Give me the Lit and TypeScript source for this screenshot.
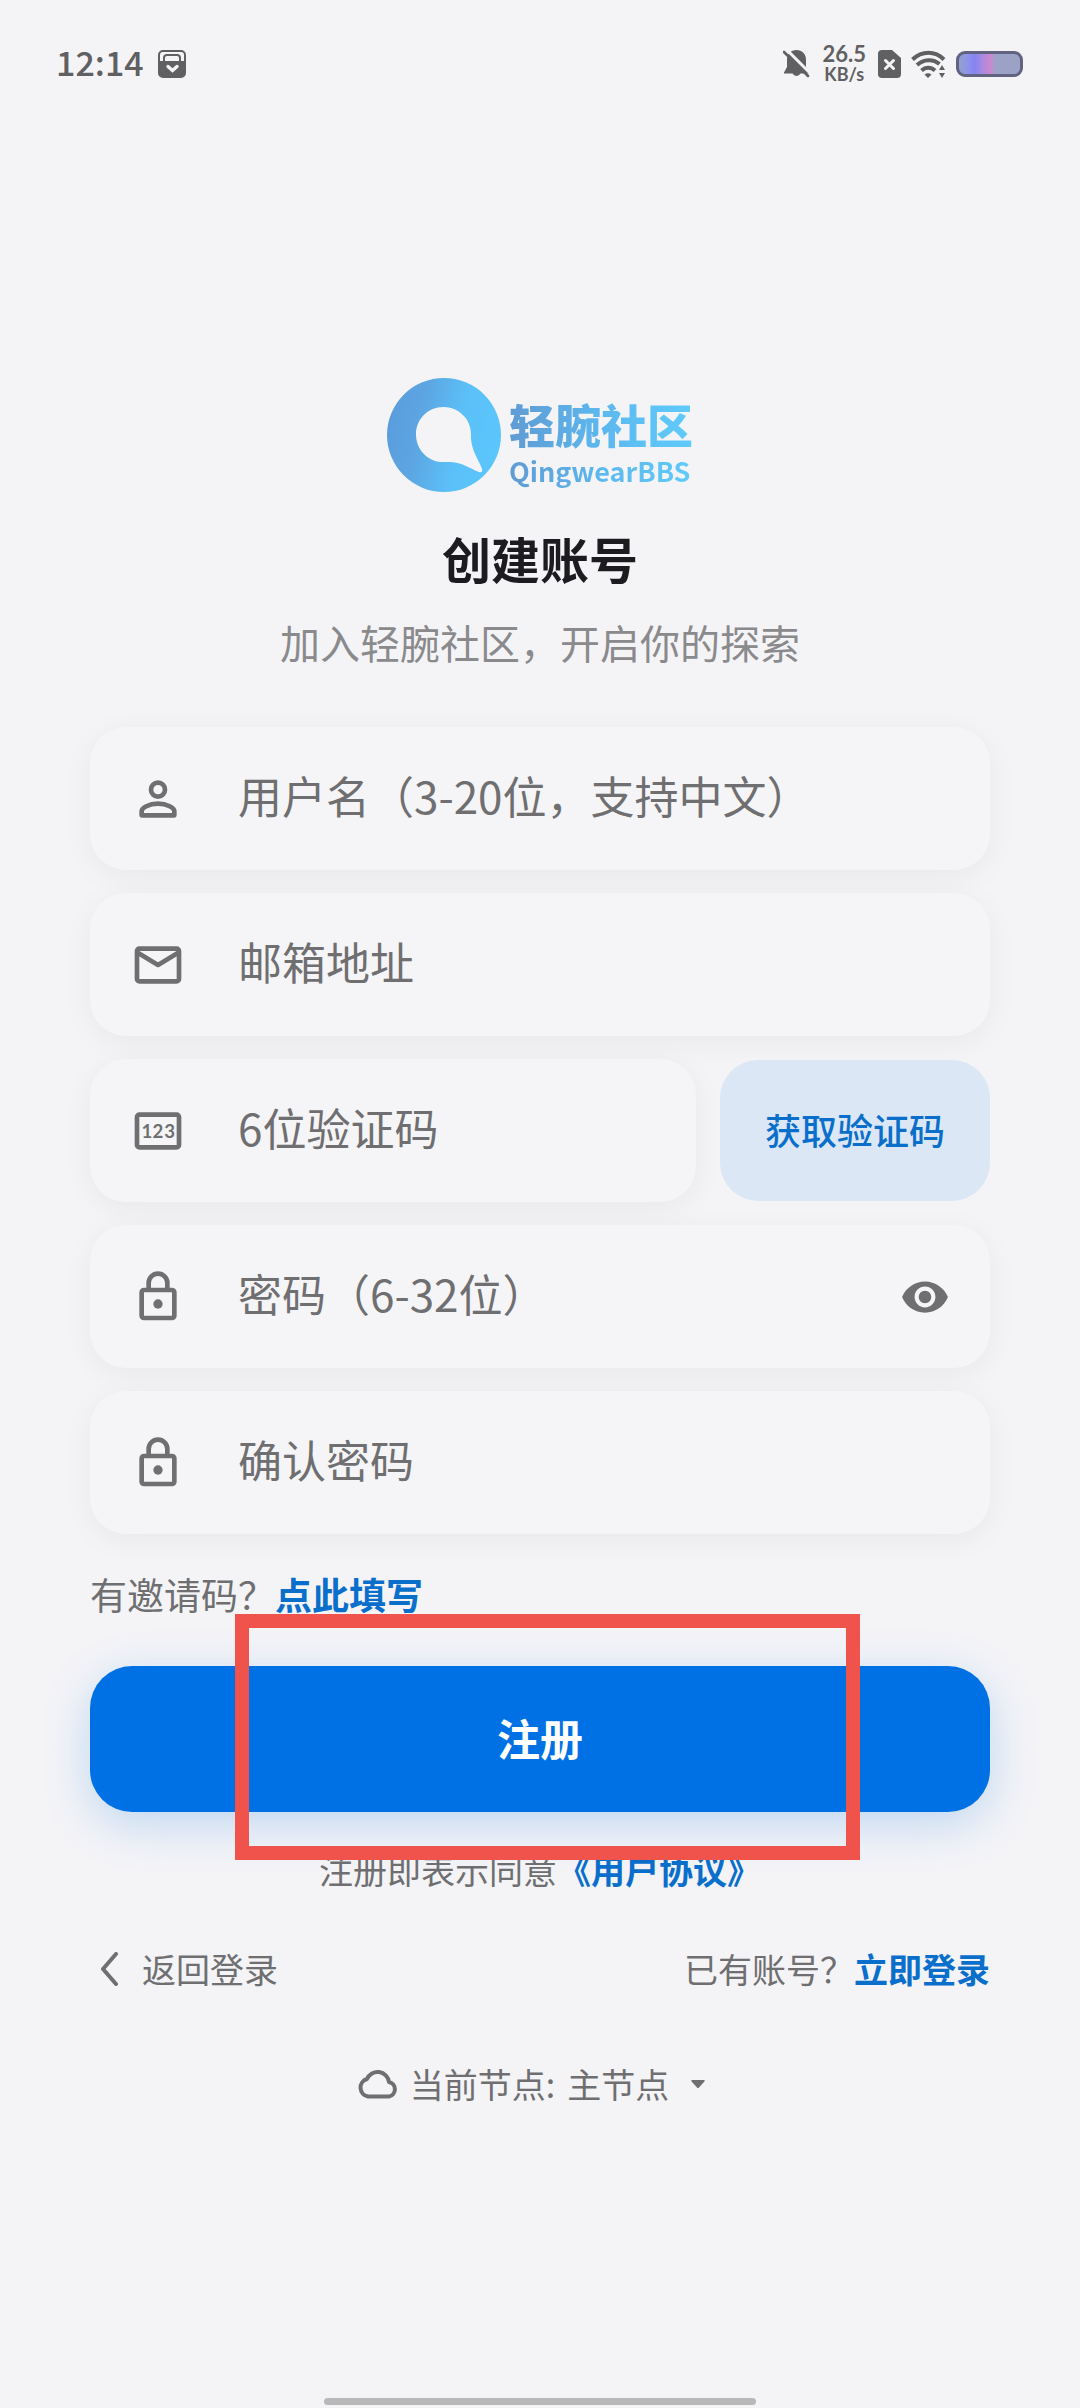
import { LitElement, html, css, svg } from "lit";
import { customElement, property, state } from "lit/decorators.js";

const ICONS: Record<string, unknown> = {
  person: svg`<circle cx="12" cy="8" r="3"/><path d="M5 19v-1.8c0-1.3 3-3.2 7-3.2s7 1.900 7 3.2V19z"/>`,
  mail: svg`<rect x="3" y="5" width="18" height="14" rx="1"/><path d="M3 6.500 12 12l9-5.500"/>`,
  pin: svg`<rect x="3" y="5" width="18" height="14" rx="1"/><text class="digits" y="14.800"><tspan x="7.200">1</tspan><tspan x="12">2</tspan><tspan x="17">3</tspan></text>`,
  lock: svg`<rect x="5" y="9" width="14" height="12" rx="1"/><path d="M8 9V6a4 4 0 0 1 8 0v3"/><circle class="solid" cx="12" cy="15" r="2"/>`,
};

@customElement("form-field")
class FormField extends LitElement {
  @property() icon = "person";
  @property() hint = "";
  @property() type = "text";
  @property({ type: Boolean }) reveal = false;
  @state() private shown = false;

  static styles = css`
    :host {
      display: block;
      flex: 1;
      min-width: 0;
    }
    .field {
      display: flex;
      align-items: center;
      box-sizing: border-box;
      height: 143px;
      padding: 0 40px;
      border-radius: 36px;
      background: #f5f5f7;
      box-shadow: 0 6px 30px rgba(0, 0, 0, 0.05);
    }
    .lead {
      flex: none;
      width: 56px;
      height: 56px;
      margin-right: 52px;
      fill: none;
      stroke: #6f6f71;
      stroke-width: 2;
      stroke-linejoin: round;
    }
    .solid {
      fill: #6f6f71;
      stroke: none;
    }
    .digits {
      fill: #6f6f71;
      stroke: none;
      font: 700 8px "Lato", "Noto Sans", sans-serif;
      text-anchor: middle;
    }
    .input {
      flex: 1;
      min-width: 0;
      padding: 0 0 8px;
      border: 0;
      outline: 0;
      background: none;
      color: #1c1b1f;
      font: 400 44px/64px "Noto Sans CJK SC", sans-serif;
    }
    .input::placeholder {
      color: #6f6f71;
      opacity: 1;
    }
    .toggle {
      display: flex;
      padding: 0;
      border: 0;
      background: none;
    }
    .eye {
      width: 50px;
      height: 50px;
      fill: #6f6f71;
    }
  `;

  render() {
    return html`
      <label class="field">
        <svg class="lead" viewBox="0 0 24 24" aria-hidden="true">${ICONS[this.icon]}</svg>
        <input
          class="input"
          type=${this.shown ? "text" : this.type}
          placeholder=${this.hint}
          aria-label=${this.hint}
        />
        ${this.reveal
          ? html`<button
              class="toggle"
              type="button"
              aria-label="显示密码"
              @click=${() => (this.shown = !this.shown)}
            >
              <svg class="eye" viewBox="0 0 24 24">
                <path
                  d="M12 4.500C7 4.500 2.730 7.610 1 12c1.730 4.390 6 7.500 11 7.500s9.270-3.110 11-7.500c-1.730-4.390-6-7.500-11-7.500zM12 17c-2.760 0-5-2.240-5-5s2.240-5 5-5 5 2.240 5 5-2.240 5-5 5zm0-8c-1.660 0-3 1.340-3 3s1.340 3 3 3 3-1.340 3-3-1.340-3-3-3z"
                />
              </svg>
            </button>`
          : ""}
      </label>
    `;
  }
}

@customElement("status-bar")
class StatusBar extends LitElement {
  static styles = css`
    :host {
      display: block;
    }
    .bar {
      display: flex;
      align-items: center;
      justify-content: space-between;
      height: 128px;
      padding: 0 57px 0 56px;
      color: #606062;
      font-family: "Noto Sans CJK SC", sans-serif;
    }
    .side {
      display: flex;
      align-items: center;
    }
    .time {
      padding-bottom: 4px;
      font-size: 34px;
      line-height: 40px;
      font-weight: 500;
    }
    .speed {
      display: flex;
      flex-direction: column;
      align-items: center;
      margin: 0 12px;
      font: 700 22px/20px "Lato", sans-serif;
    }
    .unit {
      font-size: 18px;
    }
    .glyph {
      display: block;
      height: 30px;
      fill: #606062;
    }
    .inbox {
      width: 28px;
      margin-left: 14px;
    }
    .bell {
      width: 27px;
    }
    .sim {
      width: 23px;
    }
    .wifi {
      width: 36px;
      margin: 0 9px 0 10px;
    }
    .battery {
      box-sizing: border-box;
      width: 67px;
      height: 26px;
      border: 3px solid #626281;
      border-radius: 9px;
      background: linear-gradient(
        90deg,
        #92a0ca 0%,
        #8f93e8 14%,
        #8484f2 26%,
        #a78be0 38%,
        #cc86cf 50%,
        #9ca2c8 60%,
        #9ca2c4 100%
      );
    }
  `;

  render() {
    return html`
      <div class="bar">
        <div class="side">
          <span class="time">12:14</span>
          <svg class="glyph inbox" viewBox="0 0 28 30">
            <path
              fill-rule="evenodd"
              d="M5 1h18a5 5 0 0 1 5 5v18a5 5 0 0 1-5 5H5a5 5 0 0 1-5-5V6a5 5 0 0 1 5-5zM5 3a3 3 0 0 0-3 3v6h3V9a4 4 0 0 1 4-4h10a4 4 0 0 1 4 4v3h3V6a3 3 0 0 0-3-3zM9 7a2 2 0 0 0-2 2v3h14V9a2 2 0 0 0-2-2z"
            />
            <path d="m10 17.500 4.500 4 4.500-4" fill="none" stroke="#f4f4f7" stroke-width="3.400" stroke-linecap="round" />
          </svg>
        </div>
        <div class="side">
          <svg class="glyph bell" viewBox="0 0 27 30">
            <path
              d="M13.500 1C19 1 23 5 23 10.500V18l3 5.500v1H17.500a4.500 4.500 0 0 1-8 0H1v-1L4 18v-7.500C4 5 8 1 13.500 1z"
            />
            <path d="M3 0 27 24" stroke="#f4f4f7" stroke-width="3" />
            <path d="M1 3 25 27" stroke="#606062" stroke-width="2.600" stroke-linecap="round" />
          </svg>
          <div class="speed"><span>26.5</span><span class="unit">KB/s</span></div>
          <svg class="glyph sim" viewBox="0 0 23 30">
            <path d="M4 1h10l9 8v16a4 4 0 0 1-4 4H4a4 4 0 0 1-4-4V5a4 4 0 0 1 4-4z" />
            <path d="m7.500 11.500 8 8m0-8-8 8" stroke="#f4f4f7" stroke-width="3" stroke-linecap="round" />
          </svg>
          <svg class="glyph wifi" viewBox="0 0 36 30">
            <g fill="none" stroke="#606062" stroke-width="4">
              <path d="M1.500 10.500C11 1.500 24 1.500 33 10.500" />
              <path d="M6 16c6.500-6 16-6.500 22.500-1" />
              <path d="M10.500 21.500c4-3.800 9.500-3.800 13.500 0" />
            </g>
            <path d="m13.500 25.500q3.500-2.500 7 0L17 29zM28 21l3-5 3 5zM28 24l3 5 3-5z" />
          </svg>
          <div class="battery"></div>
        </div>
      </div>
    `;
  }
}

@customElement("brand-logo")
class BrandLogo extends LitElement {
  static styles = css`
    :host {
      display: block;
    }
    .logo {
      display: flex;
      align-items: flex-start;
      justify-content: center;
      gap: 8px;
      height: 114px;
    }
    .mark {
      width: 114px;
      height: 114px;
    }
    .words {
      display: flex;
      flex-direction: column;
      padding-top: 18px;
      background: linear-gradient(90deg, #5f9bd3, #5cb8ee 50%, #5fcbfb);
      background-clip: text;
      -webkit-background-clip: text;
      color: transparent;
      font-family: "Noto Sans CJK SC", sans-serif;
    }
    .cn {
      font-size: 46px;
      line-height: 54px;
      font-weight: 900;
    }
    .en {
      font-size: 27px;
      line-height: 42px;
      font-weight: 700;
    }
  `;

  render() {
    return html`
      <div class="logo">
        <svg class="mark" viewBox="0 0 114 114" aria-hidden="true">
          <defs>
            <linearGradient id="tone" x1="0" y1="0.300" x2="1" y2="0.500">
              <stop offset="0" stop-color="#5a9cdc" />
              <stop offset="0.300" stop-color="#5ca6e2" />
              <stop offset="0.650" stop-color="#5cc0f8" />
              <stop offset="1" stop-color="#5ac6fc" />
            </linearGradient>
          </defs>
          <path
            fill="url(#tone)"
            fill-rule="evenodd"
            d="M57 0a57 57 0 1 1 0 114a57 57 0 1 1 0-114zM56.500 29C41 29 29 41 29 56.500C29 71 40 83 54 84H64C75 84.500 82 90 92 94Q96 95 95 91C92 82 84.500 73 84 60V56C84 41 71.500 29 56.500 29z"
          />
        </svg>
        <div class="words">
          <span class="cn">轻腕社区</span>
          <span class="en">QingwearBBS</span>
        </div>
      </div>
    `;
  }
}

@customElement("app-root")
class AppRoot extends LitElement {
  static styles = css`
    :host {
      display: block;
      background: #f4f4f7;
      color: #6f6f71;
      font-family: "Noto Sans CJK SC", sans-serif;
    }
    .page {
      display: flex;
      flex-direction: column;
      box-sizing: border-box;
      min-height: 100vh;
    }
    .main {
      flex: 1;
      padding: 250px 90px 48px;
    }
    .title {
      margin: 36px 0 0;
      color: #1c1b1f;
      font-size: 49px;
      line-height: 60px;
      font-weight: 700;
      text-align: center;
    }
    .subtitle {
      margin: 30px 0 61px;
      color: #8a8a8d;
      font-size: 40px;
      line-height: 48px;
      text-align: center;
    }
    .fields {
      display: flex;
      flex-direction: column;
      gap: 23px;
    }
    .split {
      display: flex;
      align-items: center;
      gap: 24px;
    }
    .code {
      flex: none;
      width: 30%;
      height: 141px;
      padding: 0 0 4px;
      border: 0;
      border-radius: 38px;
      background: #dbe7f5;
      color: #0a6fcb;
      font: 500 36px/48px "Noto Sans CJK SC", sans-serif;
    }
    .link {
      color: #0a6fcb;
      font-weight: 700;
      text-decoration: none;
    }
    .invite {
      margin: 36px 0 48px;
      font-size: 37px;
      line-height: 48px;
    }
    .action {
      position: relative;
    }
    .submit {
      display: block;
      width: 100%;
      height: 146px;
      padding: 0 0 4px;
      border: 0;
      border-radius: 42px;
      background: #0071e5;
      box-shadow: 0 12px 48px rgba(0, 113, 229, 0.22);
      color: #fff;
      font: 700 43px/60px "Noto Sans CJK SC", sans-serif;
    }
    .marker {
      position: absolute;
      z-index: 1;
      inset: -52px 130px -48px 145px;
      border: 14px solid #ef534c;
      pointer-events: none;
    }
    .small {
      font-size: 34px;
      line-height: 44px;
    }
    .terms {
      margin: 36px 0 55px;
      text-align: center;
    }
    .row {
      display: flex;
      align-items: center;
      justify-content: space-between;
      margin-bottom: 71px;
    }
    .back {
      display: flex;
      align-items: center;
      gap: 22px;
      padding-left: 10px;
      color: inherit;
      text-decoration: none;
    }
    .chevron {
      width: 20px;
      height: 34px;
    }
    .line {
      fill: none;
      stroke: #6f6f71;
      stroke-width: 4;
      stroke-linecap: round;
      stroke-linejoin: round;
    }
    .node {
      display: flex;
      align-items: center;
      justify-content: center;
      padding-right: 18px;
    }
    .cloud {
      width: 42px;
      height: 30px;
      margin-right: 11px;
    }
    .select {
      appearance: none;
      margin: 0 22px 0 12px;
      padding: 0;
      border: 0;
      background: none;
      color: inherit;
      font-family: inherit;
    }
    .caret {
      width: 14px;
      height: 8px;
      fill: #6f6f71;
    }
    .home {
      align-self: center;
      width: 40%;
      height: 7px;
      margin-bottom: 3px;
      border-radius: 4px;
      background: #b8b8b9;
    }
  `;

  render() {
    return html`
      <div class="page">
        <status-bar></status-bar>
        <main class="main">
          <brand-logo></brand-logo>
          <h1 class="title">创建账号</h1>
          <p class="subtitle">加入轻腕社区，开启你的探索</p>
          <div class="fields">
            <form-field icon="person" hint="用户名（3-20位，支持中文）"></form-field>
            <form-field icon="mail" type="email" hint="邮箱地址"></form-field>
            <div class="split">
              <form-field icon="pin" hint="6位验证码"></form-field>
              <button class="code" type="button">获取验证码</button>
            </div>
            <form-field icon="lock" type="password" hint="密码（6-32位）" reveal></form-field>
            <form-field icon="lock" type="password" hint="确认密码"></form-field>
          </div>
          <p class="invite">有邀请码？<a class="link" href="#invite">点此填写</a></p>
          <div class="action">
            <button class="submit" type="button">注册</button>
            <div class="marker"></div>
          </div>
          <p class="small terms">注册即表示同意<a class="link" href="#terms">《用户协议》</a></p>
          <div class="small row">
            <a class="back" href="#login">
              <svg class="chevron line" viewBox="0 0 20 34"><path d="M16 2 3 17l13 15" /></svg>
              <span>返回登录</span>
            </a>
            <span>已有账号？<a class="link" href="#login">立即登录</a></span>
          </div>
          <div class="small node">
            <svg class="cloud line" viewBox="0 0 42 30">
              <path d="M11 27.500a9 9 0 0 1-1-17.500a11.500 11.500 0 0 1 22 3a7.400 7.400 0 0 1 0 14.500z" />
            </svg>
            <label for="node">当前节点:</label>
            <select id="node" class="select small"><option>主节点</option></select>
            <svg class="caret" viewBox="0 0 14 8"><path d="M1 0h12q1.500 0 0 2L8 7.500q-1 1-2 0L1 2q-1.500-2 0-2z" /></svg>
          </div>
        </main>
        <div class="home"></div>
      </div>
    `;
  }
}
